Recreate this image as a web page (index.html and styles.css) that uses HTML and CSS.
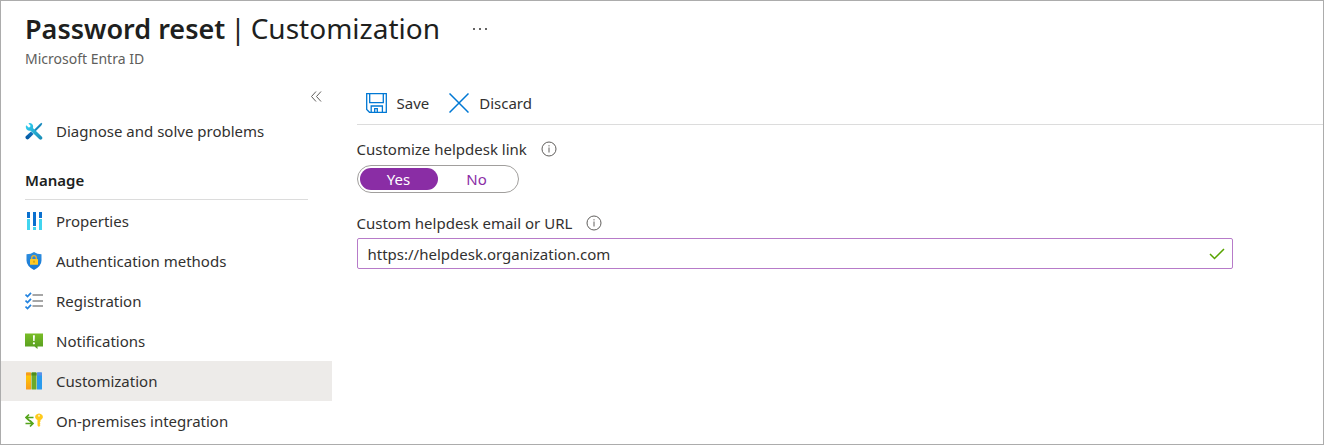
FILE: index.html
```html
<!DOCTYPE html>
<html lang="en">
<head>
<meta charset="utf-8">
<meta name="viewport" content="width=device-width, initial-scale=1">
<title>Password reset | Customization</title>
<link rel="stylesheet" href="styles.css">
</head>
<body class="page">
<header class="header">
  <div class="title-row">
    <h1 class="title"><strong>Password reset</strong> <span>|</span> <span>Customization</span></h1>
    <button class="more" type="button" aria-label="More actions"><svg width="16" height="4" viewBox="0 0 16 4" fill="#323130"><circle cx="2" cy="2" r="1"/><circle cx="8" cy="2" r="1"/><circle cx="14" cy="2" r="1"/></svg></button>
  </div>
  <p class="subtitle">Microsoft Entra ID</p>
</header>
<div class="columns">
  <nav class="sidebar" aria-label="Password reset">
    <div class="collapse-row"><button class="collapse" type="button" aria-label="Collapse menu"><svg width="11" height="11" viewBox="0 0 11 11" fill="none" stroke="#605e5c" stroke-width="1"><path d="M5 .5l-4.500 5 4.500 5M10 .5l-4.500 5 4.500 5"/></svg></button></div>
    <a class="item" href="#diagnose"><svg class="icon" viewBox="0 0 18 18"><defs><linearGradient id="wrench" x1="0" y1="0" x2="1" y2="1"><stop offset="0" stop-color="#32d4f5"/><stop offset="1" stop-color="#198ab3"/></linearGradient><linearGradient id="handle" x1="1" y1="0" x2="0" y2="1"><stop offset="0" stop-color="#1478c0"/><stop offset="1" stop-color="#00549f"/></linearGradient></defs><path d="M16.300.7l1 1-1.200 2.100-6.500 6.500-1.500-1.500 6.500-6.500z" fill="#1789bd"/><path d="M6 9.500l2.600 2.600-5 5q-1.200.9-2.500-.3-1.200-1.300-.3-2.500z" fill="url(#handle)"/><path d="M1.200 3.300L4 5.800 5.700 4 3.400 1.200Q5.400.4 7.100 2q1.500 1.800.8 3.900l9 8.900q1 1.300 0 2.300t-2.500.1L5.600 8.700Q3.300 9.200 1.700 7.500.2 5.500 1.200 3.300z" fill="url(#wrench)"/></svg>Diagnose and solve problems</a>
    <h2 class="group">Manage</h2>
    <a class="item" href="#properties"><svg class="icon" viewBox="0 0 18 18"><path d="M2 0h3v6H2zM8 0h3v14H8zM14 0h3v6h-3z" fill="#0b70cf"/><path d="M2 7h3v11H2zM8 15h3v3H8zM14 7h3v11h-3z" fill="#41d5ef"/></svg>Properties</a>
    <a class="item" href="#authentication"><svg class="icon" viewBox="0 0 18 18"><defs><linearGradient id="shield" x1="0" y1="0" x2="0" y2="1"><stop offset="0" stop-color="#2f8fe0"/><stop offset="1" stop-color="#1577d3"/></linearGradient></defs><path d="M9 0Q12 2.300 16.500 2.300V8.500Q16.500 14 9 18 1.500 14 1.500 8.500V2.300Q6 2.300 9 0z" fill="url(#shield)"/><path d="M6.700 7.500V6Q6.700 3.700 9 3.700T11.300 6v1.500" fill="none" stroke="#f0b32b" stroke-width="1.300"/><rect x="5" y="7" width="8" height="5.800" rx=".6" fill="#ffca24"/><path d="M9 8.700v2" stroke="#b58600"/></svg>Authentication methods</a>
    <a class="item" href="#registration"><svg class="icon" viewBox="0 0 18 18" fill="none"><path d="M.5 2.500l2 2L6 .8M.5 8.500l2 2L6 6.800M.5 14.500l2 2L6 12.800" stroke="#2383df" stroke-width="1.700"/><path d="M7.500 3H18M7.500 9H18M7.500 14H18" stroke="#a6a6a6" stroke-width="2"/></svg>Registration</a>
    <a class="item" href="#notifications"><svg class="icon" viewBox="0 0 18 18"><defs><linearGradient id="notice" x1="0" y1="0" x2="0" y2="1"><stop offset="0" stop-color="#79bd27"/><stop offset="1" stop-color="#559c20"/></linearGradient></defs><path d="M0 1.500h18v13h-5.500V17l-3-2.500H0z" fill="url(#notice)"/><path d="M7.900 3.200h2l-.3 5.800H8.200z" fill="#fff"/><circle cx="8.900" cy="11.300" r="1.100" fill="#fff"/></svg>Notifications</a>
    <a class="item item-current" href="#customization" aria-current="page"><svg class="icon" viewBox="0 0 18 18"><defs><linearGradient id="gold" x1="0" y1="0" x2="0" y2="1"><stop offset="0" stop-color="#ffd400"/><stop offset="1" stop-color="#f99b1c"/></linearGradient></defs><rect x="1" y=".5" width="5" height="17" rx=".6" fill="url(#gold)"/><rect x="6.500" y=".5" width="5" height="17" rx=".6" fill="#6aaa2c"/><path d="M1 1.100q0-.6.6-.6h3.800q.6 0 .6.600V3.500H1z" fill="#f59a1f"/><path d="M6.500 1.100q0-.6.6-.6h3.800q.6 0 .6.600V3.500h-5z" fill="#4d8c1d"/><rect x="12" y=".5" width="5" height="17" rx=".6" fill="#2a9bed"/><path d="M12 1.100q0-.6.6-.6h3.800q.6 0 .6.600V3.500h-5z" fill="#5b8fe8"/></svg>Customization</a>
    <a class="item" href="#integration"><svg class="icon" viewBox="0 0 18 18"><path d="M4 2.500L1 5.500l3 3M1 5.500h7.500M5 8.500l3 3-3 3M8 11.500H.5M1.300 5.500L7.500 11.500" fill="none" stroke="#55a51c" stroke-width="1.700"/><path d="M14 1.500q2 0 3.200 1.500 1.200 1.700.3 3.300-.5 1-2 1.700v1.500l-.8.900.8.900-.8.900.8.900-1.500 1.900-1.500-1.500V8q-1.500-.7-2-1.700-.9-1.600.3-3.300Q12 1.500 14 1.500z" fill="#ffca1d"/><circle cx="14" cy="3.700" r="1" fill="#fff2bd"/></svg>On-premises integration</a>
  </nav>
  <main class="main">
    <div class="toolbar">
      <button class="command" type="button"><svg width="21" height="20" viewBox="0 0 21 20" fill="none" stroke="#0078d4" stroke-width="1.300"><path d="M.7.700h19.600v18.600H3.500L.7 16.500zM3.700.700v9h13.600v-9M5.200 19v-6h11.200v6M8.700 19v-3.300h2.600V19"/></svg>Save</button>
      <button class="command" type="button"><svg width="20" height="20" viewBox="0 0 20 20" fill="none" stroke="#0078d4" stroke-width="1.500"><path d="M.5.500l19 19M19.500.5l-19 19"/></svg>Discard</button>
    </div>
    <form class="form">
      <fieldset class="field">
        <legend class="label">Customize helpdesk link <svg class="info" viewBox="0 0 16 16" fill="none" stroke="#605e5c"><circle cx="8" cy="8" r="7"/><path d="M8 6.500v5M8 4.200v1.200"/></svg></legend>
        <div class="toggle">
          <label class="choice"><input class="choice-input" type="radio" name="helpdesk" checked><span class="choice-text">Yes</span></label>
          <label class="choice"><input class="choice-input" type="radio" name="helpdesk"><span class="choice-text">No</span></label>
        </div>
      </fieldset>
      <div class="field">
        <label class="label" for="url">Custom helpdesk email or URL <svg class="info" viewBox="0 0 16 16" fill="none" stroke="#605e5c"><circle cx="8" cy="8" r="7"/><path d="M8 6.500v5M8 4.200v1.200"/></svg></label>
        <div class="textbox">
          <input class="textbox-input" id="url" type="text" value="https://helpdesk.organization.com">
          <svg width="16" height="12" viewBox="0 0 16 12" fill="none" stroke="#57a300" stroke-width="1.500"><path d="M1 6l4.500 4.500L15 1"/></svg>
        </div>
      </div>
    </form>
  </main>
</div>
</body>
</html>
```
FILE: styles.css
```css
*, *::before, *::after { box-sizing: border-box; }

.page {
  margin: 0;
  min-height: 100vh;
  border: 1px solid #acacac;
  background: #fff;
  color: #323130;
  font: 15px/20px "Noto Sans", "Open Sans", sans-serif;
}

button, input { font: inherit; color: inherit; }
button { padding: 0; border: 0; background: none; }
svg { display: block; flex: none; }

.header { padding: 7px 24px 0; }
.title-row { display: flex; align-items: center; gap: 32px; }
.title {
  display: flex;
  align-items: baseline;
  gap: 5px;
  margin: 0;
  color: #201f1e;
  font-size: 28px;
  line-height: 40px;
  font-weight: 400;
}
.title strong { font-size: 27px; font-weight: 600; }
.more { padding: 8px 0; }
.subtitle { margin: 0; color: #605e5c; font-size: 14px; line-height: 20px; }

.columns { display: flex; align-items: flex-start; padding-top: 12px; }

.sidebar { flex: 0 0 25%; padding-bottom: 3px; }
.collapse-row { display: flex; justify-content: flex-end; height: 30px; padding: 10px 10px 0 0; }
.collapse { align-self: flex-start; }
.item {
  display: flex;
  align-items: center;
  gap: 13px;
  height: 40px;
  padding-left: 24px;
  color: inherit;
  text-decoration: none;
}
.item-current { background: #edebe9; }
.icon { width: 18px; height: 18px; }
.group {
  margin: 10px 24px 1px;
  padding: 9px 0;
  border-bottom: 1px solid #dcdcdc;
  color: #201f1e;
  font-size: 15px;
  line-height: 20px;
  font-weight: 600;
}

.main { flex: 1; padding-left: 25px; }
.toolbar {
  display: flex;
  gap: 20px;
  height: 44px;
  padding-left: 9px;
  border-bottom: 1px solid #dcdcdc;
}
.command { display: flex; align-items: center; gap: 10px; }

.form { display: grid; gap: 20px; padding: 14px 90px 0 0; }
.field { min-width: 0; margin: 0; padding: 0; border: 0; }
.label { display: flex; align-items: center; gap: 14px; padding: 0; }
.info { width: 16px; height: 16px; }

.toggle {
  display: flex;
  width: 162px;
  margin-top: 6px;
  padding: 2px;
  border: 1px solid #a19f9d;
  border-radius: 14px;
}
.choice { position: relative; flex: 1; }
.choice-input { position: absolute; inset: 0; margin: 0; opacity: 0; }
.choice-text {
  display: block;
  border-radius: 11px;
  color: #8a2da5;
  line-height: 22px;
  text-align: center;
}
.choice-input:checked + .choice-text { background: #8a2da5; color: #fff; }

.textbox {
  display: flex;
  align-items: center;
  gap: 8px;
  margin-top: 5px;
  height: 31px;
  padding: 0 7px 0 10px;
  border: 1px solid #b77bc9;
  border-radius: 2px;
}
.textbox-input { flex: 1; min-width: 0; padding: 0; border: 0; outline: 0; background: none; }
```
